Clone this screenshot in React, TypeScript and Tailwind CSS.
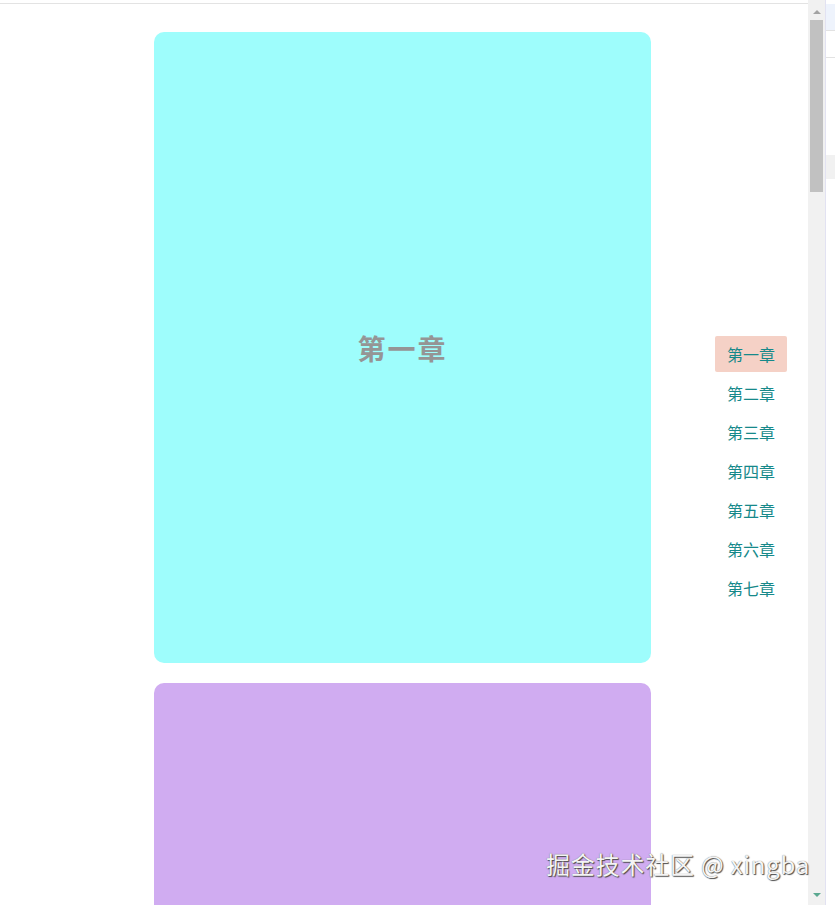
import React from "react";

const chapters = ["第一章", "第二章", "第三章", "第四章", "第五章", "第六章", "第七章"];

export default function App() {
  return (
    <div
      className="relative flex h-[905px] w-[835px] overflow-hidden bg-white"
      style={{ fontFamily: '"Microsoft YaHei", "Noto Sans CJK SC", "Noto Sans", sans-serif' }}
    >
      {/* main page */}
      <div className="flex h-full w-[808px] flex-col">
        <div className="h-[3px] shrink-0 bg-white" />
        <div className="h-px shrink-0 bg-[#e3e3e3]" />
        <div className="flex shrink-0 flex-col items-center gap-5 pt-7 pr-[3px]">
          <div className="flex h-[631px] w-[497px] shrink-0 items-center justify-center rounded-[10px] bg-[#9efdfc]">
            <span className="pt-[1px] text-[28px] font-bold tracking-[2px] text-[#959595]">第一章</span>
          </div>
          <div className="flex h-[631px] w-[497px] shrink-0 items-center justify-center rounded-[10px] bg-[#d0acf1]" />
        </div>
      </div>

      {/* right nav */}
      <nav className="absolute left-[715px] top-[336px] flex w-[72px] flex-col gap-[3px]">
        {chapters.map((c, i) => (
          <div
            key={c}
            className={
              i === 0
                ? "flex h-[36px] items-center justify-center rounded-[2px] bg-[#f5d1c6] text-[16px] text-[#16898a]"
                : "flex h-[36px] items-center justify-center text-[16px] text-[#16898a]"
            }
          >
            {c}
          </div>
        ))}
      </nav>

      {/* scrollbar */}
      <div className="relative flex h-full w-[17px] flex-col items-center bg-[#f1f1f1] pt-[4px]">
        <div className="flex h-[15px] w-full shrink-0 items-center justify-center">
          <div className="h-0 w-0 border-x-[4px] border-b-[4px] border-x-transparent border-b-[#a3a3a3]" />
        </div>
        <div className="mt-[1px] h-[172px] w-[13px] shrink-0 bg-[#c1c1c1]" />
        <div className="flex-1" />
        <div className="mb-[4px] flex h-[12px] w-full shrink-0 items-center justify-center">
          <div className="h-0 w-0 border-x-[4px] border-t-[4px] border-x-transparent border-t-[#5aa890]" />
        </div>
      </div>
      <div className="h-full w-px bg-[#e2e2f2]" />
      {/* sliver of neighbouring window */}
      <div className="flex h-full w-[9px] flex-col bg-white">
        <div className="h-[4px] shrink-0 bg-white" />
        <div className="h-[26px] shrink-0 bg-[#eef3fc]" />
        <div className="h-px shrink-0 bg-[#e2e2e2]" />
        <div className="h-[26px] shrink-0 bg-white" />
        <div className="h-px shrink-0 bg-[#e2e2e2]" />
        <div className="h-[97px] shrink-0 bg-white" />
        <div className="h-[24px] shrink-0 bg-[#f1f1f1]" />
        <div className="flex-1 bg-white" />
      </div>

      {/* watermark */}
      <div
        className="absolute left-[546px] top-[847px] whitespace-nowrap text-[24px] leading-[34px] tracking-[0.8px] text-[#f4f4f4]"
        style={{ textShadow: "1px 1px 1px #4a4a4a, 0 0 1px #666", fontFamily: '"Noto Sans CJK SC", "Noto Sans", sans-serif' }}
      >
        掘金技术社区 @ xingba
      </div>
    </div>
  );
}
